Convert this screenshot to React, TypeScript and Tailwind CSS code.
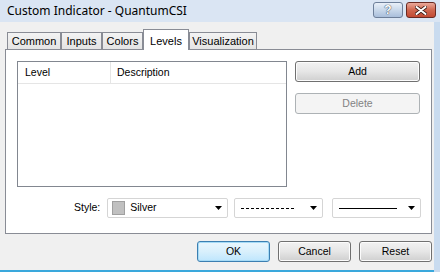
import React from 'react';

function Arrow() {
    return (
        <svg width="7" height="4" viewBox="0 0 7 4" className="shrink-0">
            <path d="M0 0 H7 L3.5 4 Z" fill="#000" />
        </svg>
    );
}

function Btn({ label, primary, disabled }: { label: string; primary?: boolean; disabled?: boolean }) {
    if (disabled) {
        return (
            <div className="h-[21px] w-[125px] rounded-[3px] border border-[#adb2b5] bg-[#f4f4f4] flex items-center justify-center text-[#838383]">
                {label}
            </div>
        );
    }
    return (
        <div
            className={`h-[21px] rounded-[3px] border flex items-center justify-center text-black ${
                primary
                    ? 'border-[#3c7fb1] bg-gradient-to-b from-[#eaf6fd] via-[#d9f0fc] to-[#bee6fd] shadow-[inset_0_0_0_1px_#a6dbf6]'
                    : 'border-[#707070] bg-gradient-to-b from-[#f2f2f2] via-[#e6e6e6] to-[#cfcfcf] shadow-[inset_0_0_0_1px_#fcfcfc]'
            }`}
        >
            {label}
        </div>
    );
}

export default function App() {
    const tabs = [
        { name: 'Common', w: 'w-[54px]' },
        { name: 'Inputs', w: 'w-[41px]' },
        { name: 'Colors', w: 'w-[41px]' },
        { name: 'Levels', w: 'w-[46px]', active: true },
        { name: 'Visualization', w: 'w-[68px]' },
    ];

    return (
        <div className="w-[440px] h-[272px] flex flex-col bg-[#dae5f3] font-['Liberation_Sans',sans-serif] text-[10.5px] text-black overflow-hidden">
            {/* Title bar */}
            <div className="h-[22px] flex items-start justify-between shrink-0">
                <div className="pl-[7px] pt-[3px] text-[12px] font-['Noto_Sans',sans-serif] leading-[16px]">
                    Custom Indicator - QuantumCSI
                </div>
                <div className="flex gap-[3px] pt-[2px] pr-[4px]">
                    <div className="w-[30px] h-[16px] rounded-[3px] border border-[#6d7f99] bg-gradient-to-b from-[#e9f0f8] via-[#c9d8ea] to-[#a9bfdb] flex items-center justify-center">
                        <span className="text-[12px] font-bold text-white leading-none [text-shadow:0_0_1px_#2b3a52,0_0_1px_#2b3a52]">?</span>
                    </div>
                    <div className="w-[30px] h-[16px] rounded-[3px] border border-[#6a2a22] bg-gradient-to-b from-[#e9a99b] via-[#d0674f] to-[#c24a33] flex items-center justify-center">
                        <svg width="12" height="9" viewBox="0 0 12 9">
                            <path d="M1.5 1 L10.5 8 M10.5 1 L1.5 8" stroke="#3b1a14" strokeWidth="3.6" strokeLinecap="round" />
                            <path d="M1.5 1 L10.5 8 M10.5 1 L1.5 8" stroke="#fff" strokeWidth="2" strokeLinecap="round" />
                        </svg>
                    </div>
                </div>
            </div>

            {/* Body */}
            <div className="flex-1 flex">
                <div className="w-[434px] bg-[#f0f0f0] flex flex-col border-b-[2px] border-b-[#3aa8dc]">
                    <div className="pl-[5px] pt-[7px]">
                        {/* Tabs */}
                        <div className="flex items-end pl-[2px] h-[20px] relative z-10">
                            {tabs.map((t) =>
                                t.active ? (
                                    <div
                                        key={t.name}
                                        className={`${t.w} h-[21px] -mb-px border border-b-0 border-[#898c95] bg-white flex items-start justify-center pt-[3px] text-[11px]`}
                                    >
                                        {t.name}
                                    </div>
                                ) : (
                                    <div
                                        key={t.name}
                                        className={`${t.w} h-[17px] border border-b-0 border-[#898c95] bg-gradient-to-b from-[#f3f3f3] to-[#e4e4e4] flex items-center justify-center text-[11px]`}
                                    >
                                        {t.name}
                                    </div>
                                )
                            )}
                        </div>
                        {/* Panel */}
                        <div className="w-[427px] h-[185px] border border-[#898c95] bg-white pl-[11px] pt-[11px]">
                            <div className="flex gap-[8px]">
                                <div className="w-[270px] h-[126px] border border-[#828790] bg-white">
                                    <div className="h-[22px] flex border-b border-[#e5e5e5]">
                                        <div className="w-[93px] border-r border-[#e5e5e5] pl-[7px] flex items-center">Level</div>
                                        <div className="pl-[6px] flex items-center">Description</div>
                                    </div>
                                </div>
                                <div className="w-[125px] flex flex-col gap-[11px]">
                                    <Btn label="Add" />
                                    <Btn label="Delete" disabled />
                                </div>
                            </div>
                            <div className="flex items-center mt-[11px] pl-[57px]">
                                <span className="mr-[7px]">Style:</span>
                                <div className="w-[121px] h-[20px] rounded-[2px] border border-[#d5d5d5] bg-white flex items-center pl-[4px] pr-[5px]">
                                    <div className="w-[13px] h-[14px] border border-[#a0a0a0] bg-[#c0c0c0]" />
                                    <span className="ml-[5px] flex-1">Silver</span>
                                    <Arrow />
                                </div>
                                <div className="ml-[6px] w-[89px] h-[20px] rounded-[2px] border border-[#d5d5d5] bg-white flex items-center pl-[6px] pr-[5px]">
                                    <div className="flex-1 mr-[16px] border-t border-dashed border-black" />
                                    <Arrow />
                                </div>
                                <div className="ml-[9px] w-[89px] h-[20px] rounded-[2px] border border-[#d5d5d5] bg-white flex items-center pl-[6px] pr-[5px]">
                                    <div className="flex-1 mr-[11px] border-t border-black" />
                                    <Arrow />
                                </div>
                            </div>
                        </div>
                    </div>
                    {/* Dialog buttons */}
                    <div className="flex justify-end gap-[8px] pr-[2px] mt-[7px]">
                        <div className="w-[73px]"><Btn label="OK" primary /></div>
                        <div className="w-[73px]"><Btn label="Cancel" /></div>
                        <div className="w-[73px]"><Btn label="Reset" /></div>
                    </div>
                </div>
                <div className="flex-1 bg-[#c9dbef]" />
            </div>
        </div>
    );
}
